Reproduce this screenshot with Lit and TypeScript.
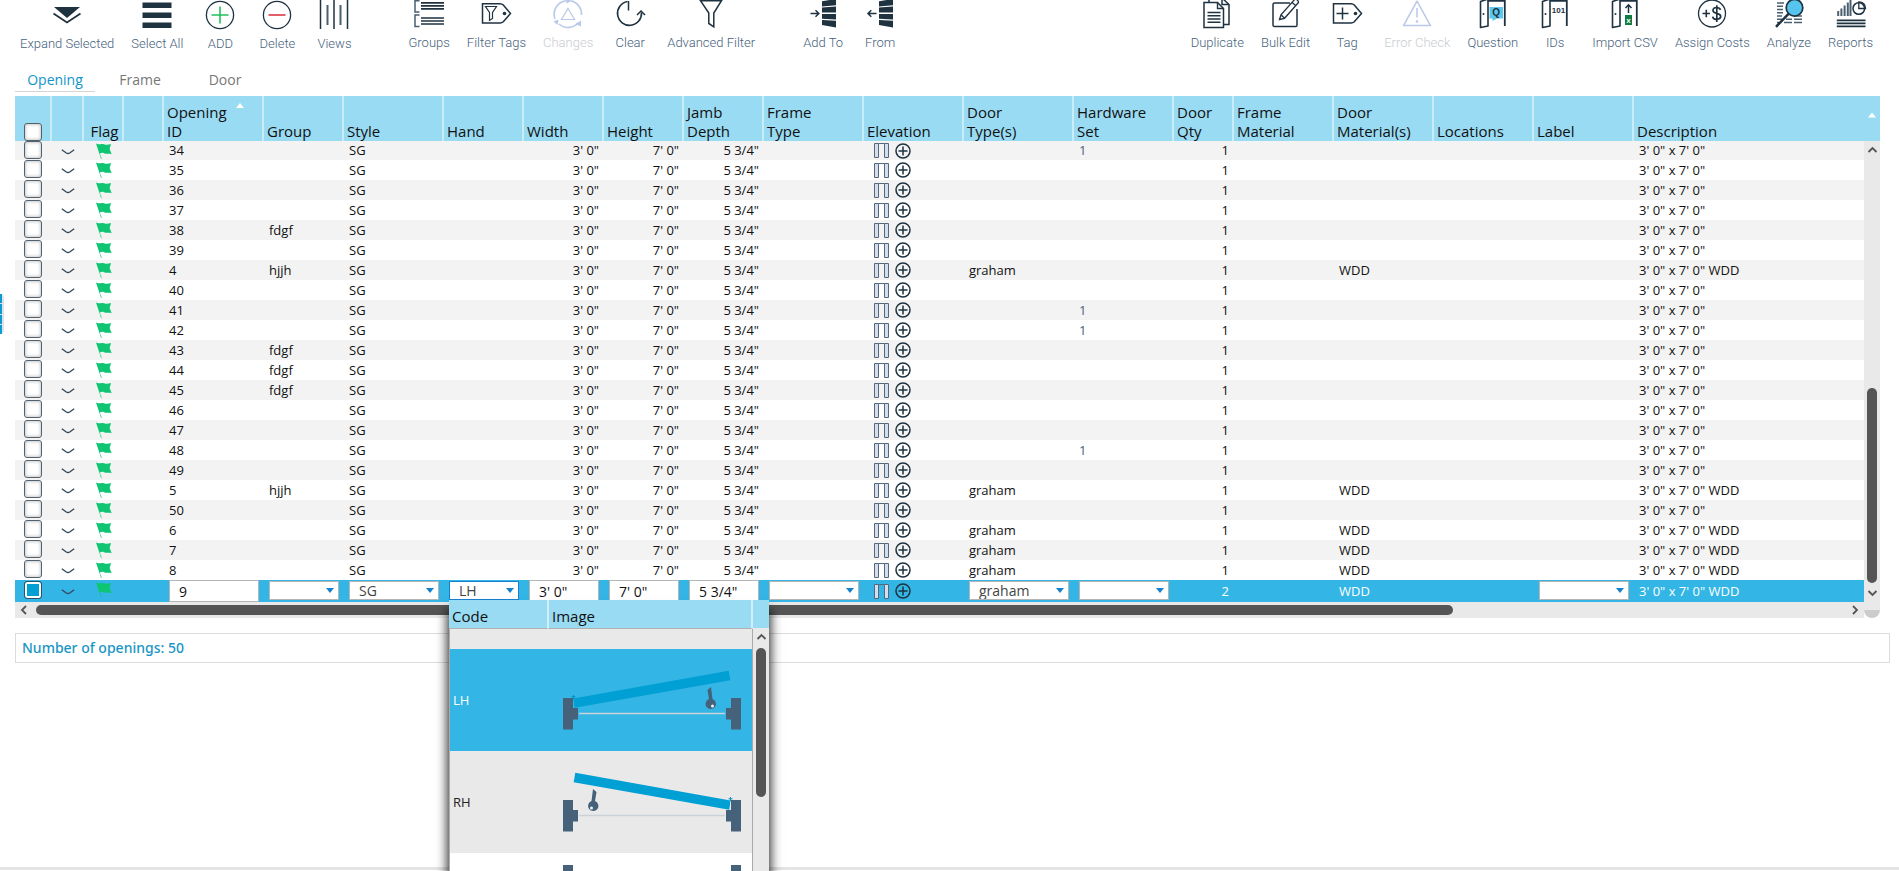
import { LitElement, html, css, svg, nothing } from "lit";
import { customElement, property, state } from "lit/decorators.js";
import { classMap } from "lit/directives/class-map.js";

type Opening = {
  id: string;
  group?: string;
  doorType?: string;
  hardware?: string;
  doorMaterial?: string;
};

type Tool = { id: string; label: string; disabled?: boolean };

const LEADING_TOOLS: Tool[][] = [
  [
    { id: "expand", label: "Expand Selected" },
    { id: "selectAll", label: "Select All" },
    { id: "add", label: "ADD" },
    { id: "delete", label: "Delete" },
    { id: "views", label: "Views" },
  ],
  [
    { id: "groups", label: "Groups" },
    { id: "filterTags", label: "Filter Tags" },
    { id: "changes", label: "Changes", disabled: true },
    { id: "clear", label: "Clear" },
    { id: "advancedFilter", label: "Advanced Filter" },
  ],
  [
    { id: "addTo", label: "Add To" },
    { id: "from", label: "From" },
  ],
];

const TRAILING_TOOLS: Tool[] = [
  { id: "duplicate", label: "Duplicate" },
  { id: "bulkEdit", label: "Bulk Edit" },
  { id: "tag", label: "Tag" },
  { id: "errorCheck", label: "Error Check", disabled: true },
  { id: "question", label: "Question" },
  { id: "ids", label: "IDs" },
  { id: "importCsv", label: "Import CSV" },
  { id: "assignCosts", label: "Assign Costs" },
  { id: "analyze", label: "Analyze" },
  { id: "reports", label: "Reports" },
];

const doorFrame = svg`
  <path d="M2.5 1.5 10 -1V26L2.5 27.5Z" stroke-width="1.6" stroke-linejoin="round"/>
  <path d="M10 .8H26.8V26" stroke-width="1.8"/>
  <circle cx="5.5" cy="14" r="1" class="solid" stroke="none"/>`;

const stack = svg`
  <path class="solid" stroke="none" d="M14 1.2 28 -1V5.2L14 6.4ZM14 7.6 28 6.6V12.6H14ZM14 14H28V19.4L14 18.8ZM14 20 28 20.8V27.4L14 25Z"/>`;

const ICONS: Record<string, unknown> = {
  expand: svg`
    <path class="solid" stroke="none" d="M2 6H28L15 17Z"/>
    <path d="M1.5 12.5 15 21.5 28.5 12.5" stroke-width="1.8"/>`,
  selectAll: svg`
    <path class="solid" stroke="none" d="M.5 1.5H29.5V7H.5ZM.5 11.5H29.5V17H.5ZM.5 21.5H29.5V27H.5Z"/>`,
  add: svg`
    <circle cx="15" cy="14" r="13.6" stroke-width="1.3"/>
    <path class="green" d="M15 5.5V22.5M6.5 14H23.5" stroke-width="1.6"/>`,
  delete: svg`
    <circle cx="15" cy="14" r="13.6" stroke-width="1.3"/>
    <path class="red" d="M6.5 14H23.5" stroke-width="1.6"/>`,
  views: svg`
    <path d="M1.5 -1V28M15 -1V28M28.5 -1V28" stroke-width="1.5"/>
    <path class="slate" d="M8.5 4V24M21.5 4V24" stroke-width="2"/>`,
  groups: svg`
    <path class="slate" d="M5.5 .7H1V12H5.5M5.5 15H1V26.5H5.5" stroke-width="1.5"/>
    <path d="M7 2.8H30M7 5.8H30M7 8.8H30M7 18H30M7 21H30M7 24H30" stroke-width="1.7"/>`,
  filterTags: svg`
    <path d="M1.5 3.7H19Q21 3.7 22.3 5L29.5 13.5 22.3 21.8Q21 23 19 23H1.5Z" stroke-width="1.5"/>
    <path d="M4.5 6.5H15.5L11.5 12.5V18.5L8.5 20.5V12.5Z" stroke-width="1.2"/>
    <circle cx="23.5" cy="13.5" r="1.8" class="solid" stroke="none"/>`,
  changes: svg`
    <path d="M18 .8A13.5 13.5 0 0 1 28.5 15M25 23A13.5 13.5 0 0 1 6 24M2 19A13.5 13.5 0 0 1 13 .8" stroke-width="1.6"/>
    <path d="M15 8.5 21.5 19.5H8.5Z" stroke-width="1.2"/>
    <path class="tint" stroke="none" d="M13 -2 18.5 1 13.5 3.5ZM28 26.5 22.5 24 28 20.5ZM.5 21.5 5.5 19.5 4.5 25Z"/>`,
  clear: svg`
    <path d="M12.5 1.5A12 12 0 1 0 26.500 12.5" stroke-width="1.6"/>
    <path d="M13.5 1V10.5" stroke-width="1.5"/>
    <path d="M22 15 26 11 30 15" stroke-width="1.5"/>`,
  advancedFilter: svg`
    <path d="M4.5 .7H25.5L17.8 13V26.8L12.8 23.5V13Z" stroke-width="1.5"/>`,
  addTo: svg`${stack}
    <path d="M2.5 13.5H10.5M7.5 10.3 10.8 13.5 7.5 16.7" stroke-width="1.5"/>`,
  from: svg`${stack}
    <path d="M3 13.5H11.5M6.3 10.3 3 13.5 6.3 16.7" stroke-width="1.5"/>`,
  duplicate: svg`
    <path class="paper" d="M7 -2H20L27 4.5V24.5H7Z" stroke-width="1.5"/>
    <path d="M20 -2V4.5H27" stroke-width="1.5"/>
    <path class="paper" d="M2 2.5H15.5L21.5 8.5V27.5H2Z" stroke-width="1.5"/>
    <path d="M15.5 2.5V8.5H21.5M5.5 12.5H18.5M5.5 15.8H18.5M5.5 19H18.5M5.5 22.3H18.5" stroke-width="1.4"/>`,
  bulkEdit: svg`
    <path d="M19 3H3.5Q2 3 2 4.5V25Q2 26.6 3.5 26.6H24.5Q26 26.6 26 25V9" stroke-width="1.5"/>
    <path d="M8.5 19.5 10 14.8 23.6 -.5Q25.5 -1.5 27.3 1.3L27.5 2.5 13.5 18.3ZM10 14.8 13.5 18.3M21 2.5 25 5.8" stroke-width="1.3"/>`,
  tag: svg`
    <path d="M1.5 3.7H19Q21 3.7 22.3 5L29.5 13.5 22.3 21.8Q21 23 19 23H1.5Z" stroke-width="1.5"/>
    <path d="M4.5 13.5H16.5M10.5 7.5V19.5" stroke-width="1.5"/>
    <circle cx="23.5" cy="13.5" r="1.8" class="solid" stroke="none"/>`,
  errorCheck: svg`
    <path d="M15 1.2 28.5 25.6H1.5Z" stroke-width="1.5" stroke-linejoin="round"/>
    <path d="M15 8V17.5" stroke-width="1.5"/>
    <circle cx="15" cy="21.5" r="1.3" class="tint" stroke="none"/>`,
  question: svg`${doorFrame}
    <path class="sky" stroke="none" d="M11.5 7H25V18.5H19L14.5 21V18.5H11.5Z"/>
    <text x="18.2" y="16" class="glyph q">Q</text>`,
  ids: svg`${doorFrame}<text x="18.5" y="12.5" class="glyph n">101</text>`,
  importCsv: svg`${doorFrame}
    <path d="M18.5 13V5M15.5 8 18.5 4.8 21.5 8" stroke-width="1.5"/>
    <rect x="15" y="15" width="7" height="10" class="sheet" stroke="none"/>
    <text x="18.5" y="23" class="glyph x">x</text>`,
  assignCosts: svg`
    <circle cx="15" cy="13.5" r="13.5" stroke-width="1.3"/>
    <path d="M5.5 13.5H13M9.3 9.7V17.3" stroke-width="1.6"/>
    <path d="M23.5 9.8Q22.5 7.5 19.7 7.5 16 7.7 16 10.5C16 14.5 23.7 12.3 23.7 16.5 23.7 19.5 16.3 20.8 15.7 16.7M19.8 5.3V22" stroke-width="1.7"/>`,
  analyze: svg`
    <path class="slate" d="M3 3H10M3 6.3H9M3 9.5H9M3 12.8H9M3 16H8M3 19.3H8M3 22.5H5M12 19.3H18M10 22.5H18M20 16H28M20 19.3H28M20 22.5H28" stroke-width="1.4"/>
    <circle cx="20.5" cy="7.8" r="8.3" class="lens" stroke-width="1.7"/>
    <path d="M14.5 13.8 2 26.8" stroke-width="2.5"/>`,
  reports: svg`
    <path class="slate" d="M2.2 16V11M5.4 16V8.5M8.6 16V5.5M11.8 16V2.5M14.5 16V0" stroke-width="2"/>
    <circle cx="22.8" cy="8.5" r="5.8" stroke-width="1.5"/>
    <path d="M22.8 2V8.5H29.5Q29.5 2 22.8 2Z" stroke-width="1.3"/>
    <path d="M.8 20.3H29.5M.8 23.3H29.5M.8 26.3H29.5" stroke-width="1.8"/>`,
};

const OPENINGS: Opening[] = [
  { id: "34", hardware: "1" },
  { id: "35" },
  { id: "36" },
  { id: "37" },
  { id: "38", group: "fdgf" },
  { id: "39" },
  { id: "4", group: "hjjh", doorType: "graham", doorMaterial: "WDD" },
  { id: "40" },
  { id: "41", hardware: "1" },
  { id: "42", hardware: "1" },
  { id: "43", group: "fdgf" },
  { id: "44", group: "fdgf" },
  { id: "45", group: "fdgf" },
  { id: "46" },
  { id: "47" },
  { id: "48", hardware: "1" },
  { id: "49" },
  { id: "5", group: "hjjh", doorType: "graham", doorMaterial: "WDD" },
  { id: "50" },
  { id: "6", doorType: "graham", doorMaterial: "WDD" },
  { id: "7", doorType: "graham", doorMaterial: "WDD" },
  { id: "8", doorType: "graham", doorMaterial: "WDD" },
];

const COLUMNS = [
  { key: "check", label: "" },
  { key: "expand", label: "" },
  { key: "flag", label: "Flag" },
  { key: "spare", label: "" },
  { key: "id", label: "Opening ID" },
  { key: "group", label: "Group" },
  { key: "style", label: "Style" },
  { key: "hand", label: "Hand" },
  { key: "width", label: "Width" },
  { key: "height", label: "Height" },
  { key: "depth", label: "Jamb Depth" },
  { key: "frameType", label: "Frame Type" },
  { key: "elevation", label: "Elevation" },
  { key: "doorType", label: "Door Type(s)" },
  { key: "hardware", label: "Hardware Set" },
  { key: "qty", label: "Door Qty" },
  { key: "frameMaterial", label: "Frame Material" },
  { key: "doorMaterial", label: "Door Material(s)" },
  { key: "locations", label: "Locations" },
  { key: "label", label: "Label" },
  { key: "description", label: "Description" },
];

@customElement("tool-button")
class ToolButton extends LitElement {
  @property() icon = "";
  @property() label = "";
  @property({ type: Boolean }) disabled = false;

  static styles = css`
    :host {
      display: block;
    }
    .tool {
      display: flex;
      flex-direction: column;
      align-items: center;
      gap: 7px;
      min-width: 56px;
      padding: 0 8px;
      border: 0;
      background: none;
      color: #46627c;
      font: 300 13px/16px Roboto, sans-serif;
      white-space: nowrap;
      cursor: pointer;
    }
    .tool:disabled {
      color: #c9ccd0;
      cursor: default;
    }
    .icon {
      display: block;
      width: 30px;
      height: 28px;
      overflow: visible;
      fill: none;
      stroke: #1e3240;
    }
    .tool:disabled .icon {
      stroke: #b9c9e8;
    }
    .solid {
      fill: #1e3240;
    }
    .tint {
      fill: #b9c9e8;
    }
    .paper {
      fill: #fff;
    }
    .green {
      stroke: #20c05c;
    }
    .red {
      stroke: #dc3545;
    }
    .slate {
      stroke: #4a5f70;
    }
    .sky {
      fill: #5cc8ee;
    }
    .lens {
      fill: #56c4ee;
    }
    .sheet {
      fill: #107c41;
    }
    .glyph {
      font-family: "Liberation Sans", sans-serif;
      font-weight: 700;
      text-anchor: middle;
      fill: #1e3240;
      stroke: none;
    }
    .q {
      font-size: 10px;
    }
    .n,
    .x {
      font-size: 8px;
    }
    .x {
      fill: #fff;
    }
  `;

  render() {
    return html`<button class="tool" type="button" ?disabled=${this.disabled}>
      <svg class="icon" viewBox="0 0 30 28" aria-hidden="true">${ICONS[this.icon]}</svg>
      <span>${this.label}</span>
    </button>`;
  }
}

@customElement("hand-menu")
class HandMenu extends LitElement {
  static styles = css`
    :host {
      display: block;
    }
    .menu {
      display: grid;
      grid-template-columns: 1fr 16px;
      background: #fff;
      box-shadow: 0 12px 10px 2px rgba(0, 0, 0, 0.8);
      font: 13px/18px "Open Sans", "Noto Sans", sans-serif;
      color: #222;
    }
    .list {
      width: 100%;
      border-spacing: 0;
      table-layout: fixed;
      text-align: left;
    }
    th {
      box-sizing: border-box;
      height: 29px;
      padding: 3px 0 0 3px;
      border-right: 2px solid #d2eefa;
      border-bottom: 1px solid #b0b0b0;
      background: #99dbf3;
      color: #111;
      font-size: 15px;
      font-weight: 400;
    }
    .code-col {
      width: 100px;
    }
    td {
      height: 102px;
      padding: 0;
      background: #e9e9e9;
    }
    td:first-child {
      padding-left: 3px;
      border-left: 1px solid #aaa;
    }
    td:last-child {
      border-right: 1px solid #aaa;
    }
    .blank td {
      height: 20px;
    }
    .selected td {
      background: #33b5e5;
      color: #fff;
    }
    .more td {
      background: #fff;
    }
    .plan {
      display: block;
      width: 178px;
      height: 102px;
      margin-left: 14px;
    }
    .jamb {
      fill: #46627a;
    }
    .leaf {
      fill: #009fd4;
    }
    .sill {
      stroke: #ccd3d8;
      stroke-width: 1.3;
    }
    .hole {
      fill: #e9f6fc;
    }
    .hinge {
      stroke: #008fc4;
      stroke-width: 1;
    }
    .rail {
      display: flex;
      flex-direction: column;
      background: #e9e9e9;
    }
    .cap {
      height: 28px;
      background: #99dbf3;
    }
    .arrow {
      display: block;
      width: 16px;
      height: 20px;
      fill: none;
      stroke: #555;
      stroke-width: 1.8;
    }
    .thumb {
      width: 10px;
      height: 149px;
      margin: 0 auto;
      border-radius: 5px;
      background: #555;
    }
  `;

  private plan(mirrored: boolean) {
    return html`<svg class="plan" viewBox="0 0 178 102" aria-hidden="true">
      <g transform=${mirrored ? "translate(178 0) scale(-1 1)" : "translate(0 0)"}>
        <path class="sill" d="M16 64.5H162" />
        <path class="jamb" d="M0 49H10V59H15V70.5H10V80.5H0ZM178 49H168V59H163V70.5H168V80.5H178Z" />
        <path class="leaf" d="M10.5 49.5 165.7 21.7 167.3 31.3 11.7 58.7Z" />
        <path class="hinge" d="M10.5 46V50M8.5 47.8H12.5" />
        <path class="jamb" d="M144.5 41 148 38 149.5 50A5.2 5.2 0 1 1 146 50Z" />
        <circle class="hole" cx="149.5" cy="57" r="1.5" />
      </g>
    </svg>`;
  }

  render() {
    return html`<div class="menu">
      <table class="list" aria-label="Hand">
        <colgroup>
          <col class="code-col" />
          <col />
        </colgroup>
        <thead>
          <tr>
            <th>Code</th>
            <th>Image</th>
          </tr>
        </thead>
        <tbody>
          <tr class="blank"><td></td><td></td></tr>
          <tr class="selected"><td>LH</td><td>${this.plan(false)}</td></tr>
          <tr><td>RH</td><td>${this.plan(true)}</td></tr>
          <tr class="more">
            <td></td>
            <td>
              <svg class="plan" viewBox="0 0 178 102" aria-hidden="true">
                <path class="jamb" d="M0 12H10V22H15V33.5H10V43.5H0ZM178 12H168V22H163V33.5H168V43.5H178Z" />
              </svg>
            </td>
          </tr>
        </tbody>
      </table>
      <div class="rail">
        <div class="cap"></div>
        <svg class="arrow" viewBox="0 0 16 20" aria-hidden="true"><path d="M4.5 11 8.5 7 12.5 11" /></svg>
        <div class="thumb"></div>
      </div>
    </div>`;
  }
}

@customElement("app-root")
class AppRoot extends LitElement {
  @state() private tab = "Opening";

  static styles = css`
    :host {
      display: flex;
      flex-direction: column;
      box-sizing: border-box;
      height: 100vh;
      overflow: hidden;
      position: relative;
      background: #fff;
      color: #111;
      font: 13px/20px "Open Sans", "Noto Sans", sans-serif;
    }
    .toolbar {
      display: flex;
      padding: 0 18px 0 12px;
    }
    .tools {
      display: flex;
      gap: 1px;
      margin-right: 32px;
    }
    .tools:first-child {
      margin-top: 1px;
      margin-right: 38px;
    }
    .tools:last-child {
      margin-left: auto;
      margin-right: 0;
    }
    .tabs {
      display: flex;
      gap: 5px;
      padding: 18px 15px 4px;
    }
    .tab {
      width: 80px;
      padding: 0 0 1px;
      border: 0;
      border-bottom: 1px solid transparent;
      background: none;
      color: #777;
      font: inherit;
      font-size: 14px;
      cursor: pointer;
    }
    .tab.active {
      border-color: #d5d5d5;
      color: #0e94c8;
      font-weight: 500;
    }
    .grid {
      display: grid;
      grid-template-columns: 1fr 16px;
      padding: 0 19px 0 15px;
    }
    .openings {
      width: 100%;
      border-spacing: 0;
      table-layout: fixed;
    }
    .c-check { width: 37px; }
    .c-expand { width: 32px; }
    .c-flag, .c-spare { width: 40px; }
    .c-qty { width: 60px; }
    .c-group, .c-hand, .c-width, .c-height, .c-depth { width: 80px; }
    .c-id, .c-style, .c-frameType, .c-elevation, .c-hardware,
    .c-frameMaterial, .c-doorMaterial, .c-locations, .c-label { width: 100px; }
    .c-doorType { width: 110px; }
    th {
      box-sizing: border-box;
      height: 45px;
      padding: 0 0 0 3px;
      border-right: 2px solid #c9ecf9;
      background: #99dbf3;
      font-size: 15px;
      font-weight: 500;
      line-height: 19px;
      text-align: left;
      vertical-align: bottom;
    }
    th:last-child {
      border-right: 0;
    }
    th.h-flag {
      text-align: center;
    }
    th.h-check {
      padding: 0;
    }
    .sortable {
      display: flex;
      justify-content: space-between;
      padding-right: 18px;
    }
    .words {
      display: block;
      width: 74px;
    }
    .sort {
      flex: none;
      width: 8px;
      height: 5px;
      background: #fff;
      clip-path: polygon(50% 0, 100% 100%, 0 100%);
    }
    tbody tr {
      --row: 20px;
    }
    tbody tr:first-child {
      --row: 19px;
    }
    tbody tr.editing {
      --row: 22px;
    }
    td {
      height: var(--row);
      padding: 0 5px;
      line-height: var(--row);
      white-space: nowrap;
      vertical-align: top;
    }
    tbody tr:nth-child(odd) td {
      background: #f3f3f3;
    }
    .num {
      text-align: right;
    }
    .linked {
      color: #46627c;
    }
    td.icon-cell {
      padding: 0;
    }
    .box {
      display: block;
      box-sizing: border-box;
      width: 18px;
      height: 18px;
      margin: 0 0 0 9px;
      appearance: none;
      border: 1px solid #52616e;
      border-radius: 3px;
      background: #fff;
      box-shadow: inset 0 0 3px 1px #ccc;
    }
    .box:checked {
      margin-top: 1px;
      border-color: #2c5268;
      background: #009fd4;
      box-shadow: inset 0 0 0 2px #fff;
    }
    .toggle {
      display: block;
      width: 32px;
      height: var(--row);
      padding: 2px 0 0;
      border: 0;
      background: none;
    }
    .glyph {
      display: block;
      margin: 0 auto;
      overflow: visible;
    }
    .chev {
      fill: none;
      stroke: #34495a;
      stroke-width: 1.4;
    }
    .flag {
      fill: #0ec572;
      margin-top: 2px;
    }
    .views {
      display: flex;
      align-items: center;
      gap: 6px;
      height: var(--row);
      padding-left: 10px;
    }
    .pane {
      fill: #d5def0;
      stroke: #54687a;
      stroke-width: 1;
    }
    .ring {
      fill: none;
      stroke: #1e3240;
      stroke-width: 1.5;
    }
    tbody tr.editing td {
      position: relative;
      background: #33b5e5;
      color: #fff;
    }
    .editing .field,
    .editing select {
      display: block;
      box-sizing: border-box;
      width: 100%;
      margin: 0;
      padding: 0 0 0 9px;
      border: 1px solid #b5b5b5;
      border-radius: 0;
      background: #fff;
      color: #111;
      font: 14px/20px "Open Sans", "Noto Sans", sans-serif;
    }
    .editing .field {
      height: 22px;
    }
    .pick {
      display: grid;
      align-items: center;
      padding-top: 1px;
    }
    .pick > * {
      grid-area: 1 / 1;
    }
    .editing select {
      appearance: none;
      height: 19px;
      line-height: 17px;
      color: #444;
    }
    .pick.open select {
      border-color: #1780cf;
    }
    .caret {
      justify-self: end;
      width: 8px;
      height: 5px;
      margin-right: 5px;
      background: #1780cf;
      clip-path: polygon(0 0, 100% 0, 50% 100%);
      pointer-events: none;
    }
    .popup {
      position: absolute;
      z-index: 5;
      top: 20px;
      left: 5px;
      width: 320px;
    }
    .vbar {
      display: flex;
      flex-direction: column;
      background: #e9e9e9;
    }
    .vcap {
      display: flex;
      align-items: center;
      justify-content: center;
      box-sizing: border-box;
      height: 45px;
      padding-bottom: 7px;
      background: #99dbf3;
    }
    .arrow {
      display: block;
      fill: none;
      stroke: #555;
      stroke-width: 1.8;
    }
    .vtrack {
      display: flex;
      flex: 1;
      flex-direction: column;
      justify-content: flex-end;
    }
    .vthumb {
      width: 10px;
      height: 46%;
      margin: 0 auto;
      border-radius: 5px;
      background: #555;
    }
    .hbar {
      display: flex;
      align-items: center;
      height: 16px;
      background: #e9e9e9;
    }
    .htrack {
      flex: 1;
    }
    .hthumb {
      width: 78.2%;
      height: 10px;
      border-radius: 5px;
      background: #555;
    }
    .corner {
      border-radius: 0 0 8px 8px;
      background: linear-gradient(#e9e9e9 50%, #ccc 50%);
    }
    .summary {
      margin: 15px 9px 0 15px;
      padding: 4px 6px;
      border: 1px solid #dcdcdc;
      color: #1a96c4;
      font-family: "Noto Sans", "Open Sans", sans-serif;
      font-size: 14px;
      font-weight: 500;
    }
    .rule {
      height: 3px;
      margin: auto 0 1px;
      background: #e4e4e4;
    }
    .handle {
      position: absolute;
      top: 294px;
      left: 0;
      display: flex;
      flex-direction: column;
      gap: 1px;
      width: 4px;
      height: 40px;
      padding: 0;
      border: 0;
      border-radius: 0 4px 4px 0;
      background: #dbe3e8;
    }
    .grip {
      flex: 1;
      width: 2px;
      background: #0c9bd2;
    }
  `;

  private renderTools(tools: Tool[]) {
    return html`<div class="tools">
      ${tools.map(
        (t) => html`<tool-button .icon=${t.id} .label=${t.label} .disabled=${!!t.disabled}></tool-button>`
      )}
    </div>`;
  }

  private renderHeading(column: { key: string; label: string }) {
    if (column.key === "check") {
      return html`<th class="h-check"><input class="box" type="checkbox" aria-label="Select all openings" /></th>`;
    }
    if (column.key === "id") {
      return html`<th>
        <div class="sortable"><span class="words">${column.label}</span><span class="sort"></span></div>
      </th>`;
    }
    const words = column.label.split(" ");
    return html`<th class="h-${column.key}">${words[0]}${words[1] ? html`<br />${words[1]}` : nothing}</th>`;
  }

  private renderLead(id: string, checked: boolean) {
    return html`
      <td class="icon-cell">
        <input class="box" type="checkbox" .checked=${checked} aria-label="Select opening ${id}" />
      </td>
      <td class="icon-cell">
        <button class="toggle" type="button" aria-label="Expand opening ${id}">
          <svg class="glyph chev" width="14" height="6" viewBox="0 0 14 6"><path d="M.8 .8 5.3 4Q7 5 8.7 4L13.2 .8" /></svg>
        </button>
      </td>
      <td class="icon-cell">
        <svg class="glyph flag" width="16" height="16" viewBox="0 0 16 16">
          <path d="M0 .6C3 2 5 .2 8 1.2 10.5 2.2 12.5 1.6 15 1L13.6 6 15.7 11.2C12.5 10.2 10.5 11.5 8 10.2 6.5 9.4 5 9.6 3.8 10.8L5.8 15.7 5 15.7 2 6.5Z" />
        </svg>
      </td>
      <td></td>
    `;
  }

  private renderElevation() {
    return html`<td class="icon-cell">
      <div class="views">
        <svg width="15" height="15" viewBox="0 0 15 15"><path class="pane" d="M.5 .5H4.5V14.5H.5ZM10.5 .5H14.5V14.5H10.5ZM4.5 .5H10.5" /></svg>
        <svg width="16" height="16" viewBox="0 0 16 16"><g class="ring"><circle cx="8" cy="8" r="7" /><path d="M8 3.5V12.5M3.5 8H12.5" /></g></svg>
      </div>
    </td>`;
  }

  private renderRow(o: Opening) {
    return html`<tr>
      ${this.renderLead(o.id, false)}
      <td>${o.id}</td>
      <td>${o.group}</td>
      <td>SG</td>
      <td></td>
      <td class="num">3' 0"</td>
      <td class="num">7' 0"</td>
      <td class="num">5 3/4"</td>
      <td></td>
      ${this.renderElevation()}
      <td>${o.doorType}</td>
      <td class="linked">${o.hardware}</td>
      <td class="num">1</td>
      <td></td>
      <td>${o.doorMaterial}</td>
      <td></td>
      <td></td>
      <td>3' 0" x 7' 0"${o.doorMaterial ? " " + o.doorMaterial : ""}</td>
    </tr>`;
  }

  private renderPick(name: string, value: string, open = false) {
    return html`<div class=${classMap({ pick: true, open })}>
      <select aria-label=${name}>
        <option selected>${value}</option>
      </select>
      <span class="caret"></span>
    </div>`;
  }

  private renderField(name: string, value: string) {
    return html`<input class="field" type="text" aria-label=${name} .value=${value} />`;
  }

  private renderEditing() {
    return html`<tr class="editing">
      ${this.renderLead("9", true)}
      <td>${this.renderField("Opening ID", "9")}</td>
      <td>${this.renderPick("Group", "")}</td>
      <td>${this.renderPick("Style", "SG")}</td>
      <td>
        ${this.renderPick("Hand", "LH", true)}
        <hand-menu class="popup"></hand-menu>
      </td>
      <td>${this.renderField("Width", "3' 0\"")}</td>
      <td>${this.renderField("Height", "7' 0\"")}</td>
      <td>${this.renderField("Jamb Depth", "5 3/4\"")}</td>
      <td>${this.renderPick("Frame Type", "")}</td>
      ${this.renderElevation()}
      <td>${this.renderPick("Door Type(s)", "graham")}</td>
      <td>${this.renderPick("Hardware Set", "")}</td>
      <td class="num">2</td>
      <td></td>
      <td>WDD</td>
      <td></td>
      <td>${this.renderPick("Label", "")}</td>
      <td>3' 0" x 7' 0" WDD</td>
    </tr>`;
  }

  render() {
    return html`
      <div class="toolbar" role="toolbar">
        ${LEADING_TOOLS.map((group) => this.renderTools(group))} ${this.renderTools(TRAILING_TOOLS)}
      </div>
      <div class="tabs" role="tablist">
        ${["Opening", "Frame", "Door"].map(
          (name) => html`<button
            class=${classMap({ tab: true, active: this.tab === name })}
            type="button"
            role="tab"
            aria-selected=${this.tab === name}
            @click=${() => (this.tab = name)}
          >${name}</button>`
        )}
      </div>
      <div class="grid">
        <table class="openings">
          <colgroup>
            ${COLUMNS.map((c) => html`<col class="c-${c.key}" />`)}
          </colgroup>
          <thead>
            <tr>${COLUMNS.map((c) => this.renderHeading(c))}</tr>
          </thead>
          <tbody>
            ${OPENINGS.map((o) => this.renderRow(o))} ${this.renderEditing()}
          </tbody>
        </table>
        <div class="vbar">
          <div class="vcap"><span class="sort"></span></div>
          <svg class="arrow" width="16" height="18" viewBox="0 0 16 18"><path d="M4.5 11 8.5 7 12.5 11" /></svg>
          <div class="vtrack"><div class="vthumb"></div></div>
          <svg class="arrow" width="16" height="19" viewBox="0 0 16 19"><path d="M4.5 8 8.5 12 12.5 8" /></svg>
        </div>
        <div class="hbar">
          <svg class="arrow" width="21" height="16" viewBox="0 0 21 16"><path d="M11 4 7 8 11 12" /></svg>
          <div class="htrack"><div class="hthumb"></div></div>
          <svg class="arrow" width="16" height="16" viewBox="0 0 16 16"><path d="M5 4 9 8 5 12" /></svg>
        </div>
        <div class="corner"></div>
      </div>
      <div class="summary">Number of openings: 50</div>
      <div class="rule"></div>
      <button class="handle" type="button" aria-label="Open side panel">
        <span class="grip"></span><span class="grip"></span><span class="grip"></span><span class="grip"></span>
      </button>
    `;
  }
}
